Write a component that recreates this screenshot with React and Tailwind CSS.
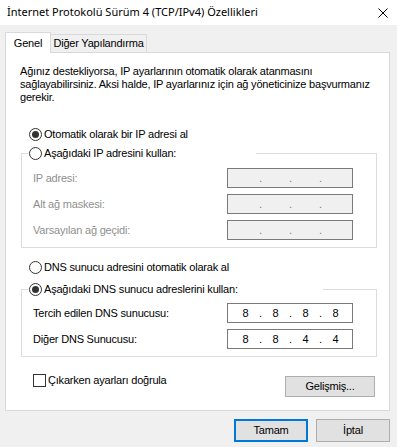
import React from "react";

const Radio = ({ checked }) => (
  <span className="w-[13px] h-[13px] rounded-full border border-[#333] bg-white flex items-center justify-center shrink-0">
    {checked && <span className="w-[7px] h-[7px] rounded-full bg-[#333]" />}
  </span>
);

const IpBox = ({ parts, disabled }) => (
  <div
    className={
      "w-[126px] h-[20px] border flex items-center pl-[10px] " +
      (disabled ? "bg-[#f0f0f0] border-[#7a7a7a] text-[#7a7a7a]" : "bg-white border-[#7a7a7a] text-black")
    }
  >
    {parts.map((p, i) => (
      <React.Fragment key={i}>
        <span className="w-[15px] text-center">{p}</span>
        {i < 3 && <span className="w-[15px] text-center">.</span>}
      </React.Fragment>
    ))}
  </div>
);

const Row = ({ label, parts, disabled }) => (
  <div className="h-[20px] flex items-center">
    <span className={"flex-1 pl-[11px] " + (disabled ? "text-[#8f8f8f]" : "text-black")}>{label}</span>
    <div className="mr-[23px]">
      <IpBox parts={parts} disabled={disabled} />
    </div>
  </div>
);

export default function App() {
  return (
    <div className="w-[397px] h-[447px] bg-[#f0f0f0] flex flex-col text-[11px] tracking-[-0.2px] text-black whitespace-nowrap font-['Liberation_Sans',sans-serif]">
      {/* title bar */}
      <div className="h-[25px] bg-white flex items-center justify-between pl-[7px] pr-[9px] text-[11px] tracking-normal font-['Noto_Sans',sans-serif]">
        <span>İnternet Protokolü Sürüm 4 (TCP/IPv4) Özellikleri</span>
        <svg width="10" height="10" viewBox="0 0 10 10">
          <path d="M0.5 0.5 L9.5 9.5 M9.5 0.5 L0.5 9.5" stroke="#000" strokeWidth="1" />
        </svg>
      </div>

      {/* tabs */}
      <div className="flex items-end pl-[5px] mt-[7px] h-[20px]">
        <div className="relative z-10 -mb-px w-[46px] h-[21px] bg-white border border-b-0 border-[#d9d9d9] flex items-center justify-center">
          Genel
        </div>
        <div className="w-[96px] h-[18px] bg-[#f0f0f0] border border-l-0 border-b-0 border-[#d9d9d9] flex items-center justify-center">
          Diğer Yapılandırma
        </div>
      </div>

      {/* panel */}
      <div className="ml-[5px] w-[385px] h-[359px] bg-white border border-[#d9d9d9] flex flex-col">
        <div className="pt-[12px] pl-[14px] leading-[13px]">
          <div>Ağınız destekliyorsa, IP ayarlarının otomatik olarak atanmasını</div>
          <div>sağlayabilirsiniz. Aksi halde, IP ayarlarınız için ağ yöneticinize başvurmanız</div>
          <div>gerekir.</div>
        </div>

        <div className="mt-[24px] ml-[23px] h-[13px] flex items-center gap-[2px]">
          <Radio checked />
          <span>Otomatik olarak bir IP adresi al</span>
        </div>

        <fieldset className="mt-[6px] ml-[15px] w-[356px] border border-[#dcdcdc] pb-[7px]">
          <legend className="ml-[6px] pl-[1px] w-[228px] h-[13px] flex items-center gap-[2px] bg-white">
            <Radio />
            <span>Aşağıdaki IP adresini kullan:</span>
          </legend>
          <div className="mt-[8px] flex flex-col gap-[6px]">
            <Row label="IP adresi:" parts={["", "", "", ""]} disabled />
            <Row label="Alt ağ maskesi:" parts={["", "", "", ""]} disabled />
            <Row label="Varsayılan ağ geçidi:" parts={["", "", "", ""]} disabled />
          </div>
        </fieldset>

        <div className="mt-[13px] ml-[23px] h-[13px] flex items-center gap-[2px]">
          <Radio />
          <span>DNS sunucu adresini otomatik olarak al</span>
        </div>

        <fieldset className="mt-[9px] ml-[15px] w-[356px] border border-[#dcdcdc] pb-[7px]">
          <legend className="ml-[6px] pl-[1px] w-[295px] h-[13px] flex items-center gap-[2px] bg-white">
            <Radio checked />
            <span>Aşağıdaki DNS sunucu adreslerini kullan:</span>
          </legend>
          <div className="mt-[7px] flex flex-col gap-[6px]">
            <Row label="Tercih edilen DNS sunucusu:" parts={["8", "8", "8", "8"]} />
            <Row label="Diğer DNS Sunucusu:" parts={["8", "8", "4", "4"]} />
          </div>
        </fieldset>

        <div className="mt-[17px] flex items-start justify-between">
          <div className="ml-[27px] h-[13px] flex items-center gap-[2px]">
            <span className="w-[13px] h-[13px] border border-[#333] bg-white shrink-0" />
            <span>Çıkarken ayarları doğrula</span>
          </div>
          <button className="mt-[2px] mr-[14px] w-[90px] h-[21px] bg-[#e1e1e1] border border-[#adadad] flex items-center justify-center">
            Gelişmiş...
          </button>
        </div>
      </div>

      {/* footer */}
      <div className="mt-[8px] flex justify-end gap-[8px] pr-[7px]">
        <button className="w-[74px] h-[23px] bg-[#e1e1e1] border-2 border-[#0078d7] flex items-center justify-center">
          Tamam
        </button>
        <button className="w-[74px] h-[23px] bg-[#e1e1e1] border border-[#adadad] flex items-center justify-center">
          İptal
        </button>
      </div>
    </div>
  );
}
